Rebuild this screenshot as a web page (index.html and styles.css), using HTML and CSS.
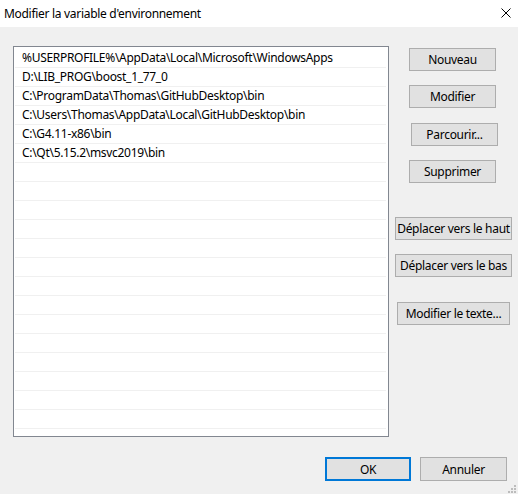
FILE: index.html
```html
<!DOCTYPE html>
<html lang="fr">
<head>
    <meta charset="UTF-8">
    <title>Modifier la variable d'environnement</title>
    <link rel="stylesheet" href="styles.css">
</head>
<body>
    <div class="window">
        <div class="titlebar">
            <span class="title">Modifier la variable d'environnement</span>
            <svg class="close" width="10" height="10" viewBox="0 0 10 10">
                <path d="M0.5 0.5 L9.5 9.5 M9.5 0.5 L0.5 9.5" stroke="#000" stroke-width="1" fill="none"/>
            </svg>
        </div>
        <div class="content">
            <div class="main">
                <div class="list">
                    <div class="row">%USERPROFILE%\AppData\Local\Microsoft\WindowsApps</div>
                    <div class="row">D:\LIB_PROG\boost_1_77_0</div>
                    <div class="row">C:\ProgramData\Thomas\GitHubDesktop\bin</div>
                    <div class="row">C:\Users\Thomas\AppData\Local\GitHubDesktop\bin</div>
                    <div class="row">C:\G4.11-x86\bin</div>
                    <div class="row">C:\Qt\5.15.2\msvc2019\bin</div>
                    <div class="row"></div>
                    <div class="row"></div>
                    <div class="row"></div>
                    <div class="row"></div>
                    <div class="row"></div>
                    <div class="row"></div>
                    <div class="row"></div>
                    <div class="row"></div>
                    <div class="row"></div>
                    <div class="row"></div>
                    <div class="row"></div>
                    <div class="row"></div>
                    <div class="row"></div>
                    <div class="row"></div>
                </div>
                <div class="side">
                    <button class="btn btn-new">Nouveau</button>
                    <button class="btn btn-edit">Modifier</button>
                    <button class="btn btn-browse">Parcourir...</button>
                    <button class="btn btn-delete">Supprimer</button>
                    <button class="btn btn-up">Déplacer vers le haut</button>
                    <button class="btn btn-down">Déplacer vers le bas</button>
                    <button class="btn btn-text">Modifier le texte...</button>
                </div>
            </div>
            <div class="footer">
                <button class="btn btn-ok">OK</button>
                <button class="btn btn-cancel">Annuler</button>
            </div>
        </div>
        <svg class="grip" width="8" height="8" viewBox="0 0 8 8">
            <rect x="6" y="0" width="2" height="2" fill="#bcbcbc"/>
            <rect x="6" y="3" width="2" height="2" fill="#bcbcbc"/>
            <rect x="3" y="3" width="2" height="2" fill="#bcbcbc"/>
            <rect x="6" y="6" width="2" height="2" fill="#bcbcbc"/>
            <rect x="3" y="6" width="2" height="2" fill="#bcbcbc"/>
            <rect x="0" y="6" width="2" height="2" fill="#bcbcbc"/>
        </svg>
    </div>
</body>
</html>
```

FILE: styles.css
```css
body {
    margin: 0;
    font-family: "Noto Sans", "Open Sans", sans-serif;
    font-size: 12px;
    letter-spacing: -0.3px;
    color: #000;
}
.window {
    position: relative;
    width: 518px;
    height: 494px;
    background-color: #f0f0f0;
    overflow: hidden;
}
.titlebar {
    height: 27px;
    background: white;
    display: flex;
    align-items: center;
    justify-content: space-between;
    padding: 0 7px 0 4px;
}
.title {
    font-size: 12px;
}
.close {
    display: block;
    margin-top: -1px;
}
.content {
    padding: 19px 0 0 13px;
}
.main {
    display: flex;
}
.list {
    width: 374px;
    height: 387px;
    background: white;
    border: 1px solid #828790;
    padding-top: 2px;
    overflow: hidden;
    box-sizing: content-box;
}
.row {
    height: 18px;
    line-height: 18px;
    margin: 0 2px 0 1px;
    padding-left: 7px;
    border-bottom: 1px solid #f0f0f0;
    white-space: nowrap;
}
.side {
    display: flex;
    flex-direction: column;
    align-items: flex-start;
    margin-left: 6px;
    width: 116px;
}
.btn {
    font-family: inherit;
    font-size: 12px;
    letter-spacing: inherit;
    color: #000;
    height: 23px;
    padding: 0;
    white-space: nowrap;
    background-color: #e1e1e1;
    border: 1px solid #adadad;
    border-radius: 0;
    box-sizing: border-box;
    cursor: pointer;
}
.btn-new { width: 87px; margin: 2px 0 0 14px; }
.btn-edit { width: 87px; margin: 14px 0 0 14px; }
.btn-browse { width: 87px; margin: 15px 0 0 16px; }
.btn-delete { width: 87px; margin: 14px 0 0 14px; }
.btn-up { width: 117px; margin: 34px 0 0 0; }
.btn-down { width: 117px; margin: 14px 0 0 0; }
.btn-text { width: 113px; margin: 25px 0 0 2px; }
.footer {
    display: flex;
    justify-content: flex-end;
    gap: 9px;
    margin-top: 20px;
    padding-right: 11px;
}
.btn-ok {
    width: 86px;
    height: 24px;
    border: 2px solid #0078d7;
}
.btn-cancel {
    width: 87px;
    height: 24px;
}
.grip {
    position: absolute;
    right: 2px;
    bottom: 1px;
}
```
